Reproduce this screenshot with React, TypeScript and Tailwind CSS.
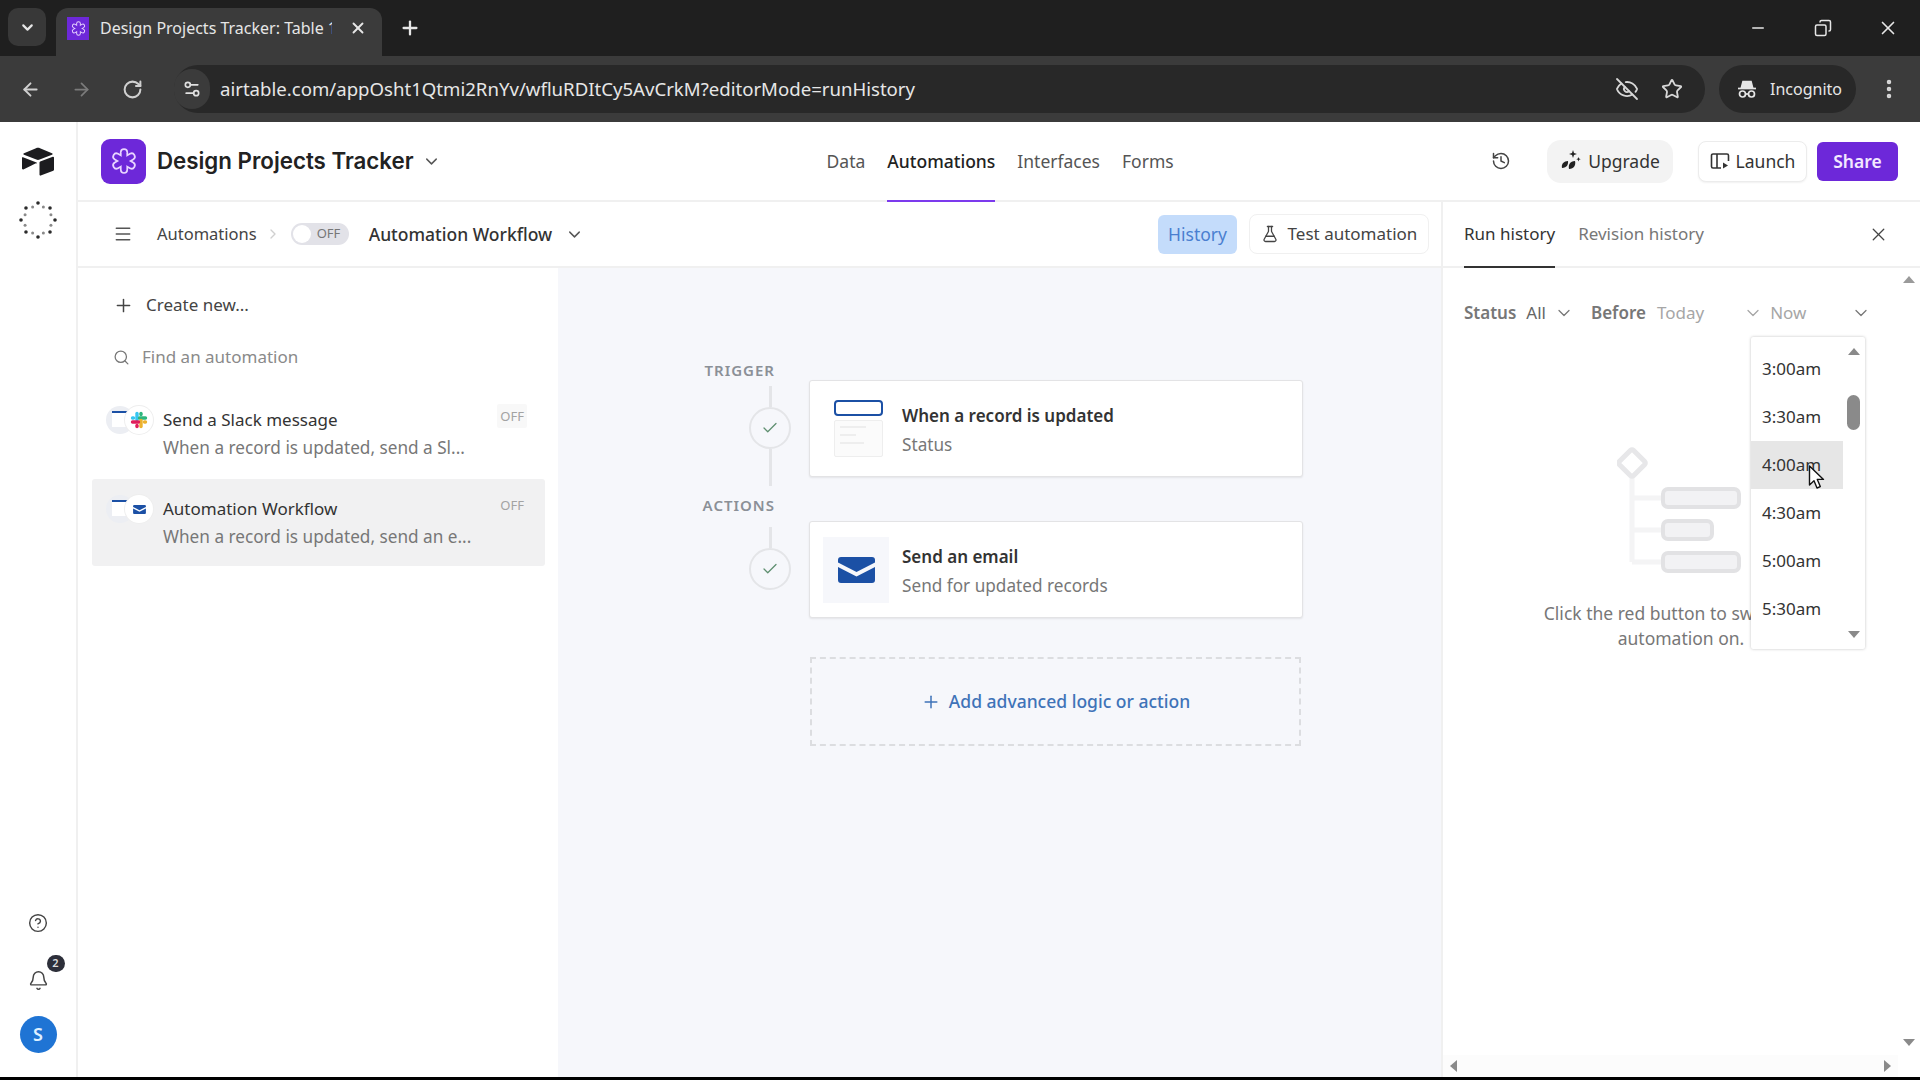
import React from 'react'
import {
  ArrowLeft,
  ArrowRight,
  Bell,
  ChevronDown,
  ChevronRight,
  CircleHelp,
  Copy,
  EllipsisVertical,
  EyeOff,
  FlaskConical,
  History,
  Menu,
  Minus,
  Plus,
  RotateCw,
  Search,
  Settings2,
  Star,
  X,
  Check,
} from 'lucide-react'

const times = ['3:00am', '3:30am', '4:00am', '4:30am', '5:00am', '5:30am']

function BaseGlyph({ size }: { size: number }) {
  const arms = [0, 60, 120]
  return (
    <svg width={size} height={size} viewBox="0 0 24 24" fill="none" strokeLinecap="round">
      {arms.map((a) => (
        <line key={a} x1="12" y1="5" x2="12" y2="19" stroke="#e9d5ff" strokeWidth="6.5" transform={`rotate(${a} 12 12)`} />
      ))}
      {arms.map((a) => (
        <line key={a + 1} x1="12" y1="5" x2="12" y2="19" stroke="#6d28d9" strokeWidth="3.8" transform={`rotate(${a} 12 12)`} />
      ))}
    </svg>
  )
}

function AirtableLogo() {
  return (
    <svg width="34" height="30" viewBox="0 0 34 30">
      <path d="M15 1.2 3 6.2c-.8.3-.8 1.300 0 1.600l12.300 4.800c1.100.4 2.300.4 3.400 0L31 7.800c.8-.3.8-1.300 0-1.600L19 1.200c-1.300-.5-2.700-.5-4 0Z" fill="#1c1c1f" />
      <path d="M18.500 15.500v12.300c0 .6.600 1 1.200.8l12.600-4.900c.4-.1.700-.5.700-.9V10.500c0-.6-.6-1-1.200-.8L19.200 14.600c-.4.200-.7.500-.7.900Z" fill="#1c1c1f" />
      <path d="M15.500 16 11.400 18l-.4.200-8.700 4.200C1.800 22.700 1 22.300 1 21.600V10.800c0-.3.100-.4.300-.5.100-.1.200-.1.300-.1.100 0 .2 0 .4.100l13.500 5.300c.6.200.600 1 0 1.400Z" fill="#1c1c1f" />
    </svg>
  )
}

function DotsRing() {
  const dots = Array.from({ length: 16 }, (_, i) => i)
  return (
    <svg width="38" height="38" viewBox="0 0 38 38">
      {dots.map((i) => {
        const a = (i / 16) * Math.PI * 2 - Math.PI / 2
        const big = i % 2 === 0
        return (
          <circle
            key={i}
            cx={19 + Math.cos(a) * (big ? 17 : 14)}
            cy={19 + Math.sin(a) * (big ? 17 : 14)}
            r={big ? 1.800 : 1.500}
            fill={big ? '#2b2b2b' : '#8a8a8a'}
          />
        )
      })}
    </svg>
  )
}

function IncognitoGlyph() {
  return (
    <svg width="22" height="22" viewBox="0 0 22 22" fill="none" stroke="#e6e6e6" strokeWidth="1.700">
      <path d="M7 3.500h8l1.500 6h-11Z" fill="#e6e6e6" />
      <path d="M2 10.500h18" />
      <circle cx="6.500" cy="16" r="3" />
      <circle cx="15.500" cy="16" r="3" />
      <path d="M9.500 16h3" />
    </svg>
  )
}

function UpgradeGlyph() {
  return (
    <svg width="22" height="24" viewBox="0 0 22 24" fill="#222">
      <path d="M13 1l1 3 3 1-3 1-1 3-1-3-3-1 3-1Z" />
      <path d="M18.500 8l.6 1.600 1.600.6-1.600.6-.6 1.600-.6-1.600-1.600-.6 1.600-.6Z" />
      <path d="M2 19c-1-4 2-7 6-7 .5 3-1 7-6 7Z" />
      <path d="M9 20c-1-4 1-8 6-8 1 4-1 8-6 8Z" />
    </svg>
  )
}

function LaunchGlyph() {
  return (
    <svg width="20" height="20" viewBox="0 0 20 20" fill="none" stroke="#333" strokeWidth="1.600">
      <path d="M11 17H3a1.500 1.500 0 0 1-1.500-1.500v-11A1.500 1.500 0 0 1 3 3h14a1.500 1.500 0 0 1 1.500 1.500V10" />
      <path d="M7 3v14" />
      <path d="M13 11.500v6l5-3Z" fill="#333" stroke="none" />
    </svg>
  )
}

function SlackGlyph() {
  return (
    <svg width="18" height="18" viewBox="0 0 18 18" strokeLinecap="round" strokeWidth="3.400">
      <path d="M7 2.500v6" stroke="#36c5f0" />
      <path d="M2.500 7h1" stroke="#36c5f0" />
      <path d="M15.500 7h-6" stroke="#2eb67d" />
      <path d="M11 2.500v1" stroke="#2eb67d" />
      <path d="M11 15.500v-6" stroke="#ecb22e" />
      <path d="M15.500 11h-1" stroke="#ecb22e" />
      <path d="M2.500 11h6" stroke="#e01e5a" />
      <path d="M7 15.500v-1" stroke="#e01e5a" />
    </svg>
  )
}

function EnvelopeGlyph({ w, h }: { w: number; h: number }) {
  return (
    <svg width={w} height={h} viewBox="0 0 37 26">
      <path d="M3 0h31a3 3 0 0 1 3 3v2.500L18.500 15 0 5.500V3a3 3 0 0 1 3-3Z" fill="#1b50a5" />
      <path d="M0 10l18.500 9.500L37 10v13a3 3 0 0 1-3 3H3a3 3 0 0 1-3-3Z" fill="#1b50a5" />
    </svg>
  )
}

function PairIcon({ children }: { children: React.ReactNode }) {
  return (
    <div className="relative h-[28px] w-[48px] shrink-0">
      <div className="absolute left-0 top-0 h-[28px] w-[28px] overflow-hidden rounded-full bg-[#eceef3]">
        <div className="mx-auto mt-[5px] h-[2px] w-[16px] bg-[#1b50a5]" />
        <div className="mx-auto h-[14px] w-[16px] bg-white" />
      </div>
      <div className="absolute left-[19px] top-0 flex h-[28px] w-[28px] items-center justify-center rounded-full bg-white shadow-[0_0_0_1px_#eeeeee]">
        {children}
      </div>
    </div>
  )
}

function AutomationRow({ title, sub, active, icon }: { title: string; sub: string; active?: boolean; icon: React.ReactNode }) {
  return (
    <div className={`flex h-[87px] w-[453px] items-start rounded-[3px] pl-[14px] pr-[18px] pt-[16px] ${active ? 'bg-[#f1f1f2]' : ''}`}>
      <PairIcon>{icon}</PairIcon>
      <div className="ml-[9px] min-w-0 flex-1">
        <div className="text-[17px] leading-[28px] text-[#333333]">{title}</div>
        <div className="text-[17.200px] leading-[28px] text-[#777777]">{sub}</div>
      </div>
      <div className={`mt-[-2px] rounded-[2px] px-[3px] text-[13px] leading-[24px] text-[#a3a3a3] ${active ? '' : 'bg-[#f8f8f8]'}`}>OFF</div>
    </div>
  )
}

function StepRail({ lineBelow }: { lineBelow: boolean }) {
  return (
    <div className="flex w-[42px] flex-col items-center">
      <div className="h-[21px] w-[3px] bg-[#e4e5e8]" />
      <div className="flex h-[42px] w-[42px] items-center justify-center rounded-full border-2 border-[#e4e5e8] bg-[#f6f7fb]">
        <Check size={18} strokeWidth={1.700} color="#5f8f70" />
      </div>
      {lineBelow && <div className="h-[37px] w-[3px] bg-[#e4e5e8]" />}
    </div>
  )
}

function TriggerPreview() {
  return (
    <div className="ml-[5px] flex w-[49px] flex-col gap-[4px]">
      <div className="h-[16px] rounded-[4px] border-2 border-[#1b50a5] bg-white" />
      <div className="flex h-[37px] flex-col gap-[6px] rounded-[2px] border border-[#eeeeee] bg-[#fbfbfb] p-[5px]">
        <div className="h-[2px] w-[26px] bg-[#eeeeee]" />
        <div className="h-[2px] w-[16px] bg-[#eeeeee]" />
        <div className="h-[2px] w-[24px] bg-[#eeeeee]" />
      </div>
    </div>
  )
}

function StepCard({ title, sub, children }: { title: string; sub: string; children: React.ReactNode }) {
  return (
    <div className="flex h-[97px] w-[494px] items-center rounded-[3px] border border-[#e3e3e5] bg-white shadow-[0_1px_2px_rgba(0,0,0,0.08)]">
      <div className="flex w-[92px] shrink-0 justify-center">{children}</div>
      <div className="pt-[2px]">
        <div className="text-[17px] font-semibold leading-[30px] text-[#333333]">{title}</div>
        <div className="text-[17.200px] leading-[28px] text-[#777777]">{sub}</div>
      </div>
    </div>
  )
}

function EmptyArt() {
  return (
    <svg width="130" height="128" viewBox="0 0 130 128" fill="none">
      <path d="M15 20v96M15 52h30M15 84h30M15 116h30" stroke="#f4f4f5" strokeWidth="5" />
      <rect x="5" y="7" width="20" height="20" rx="2" transform="rotate(45 15 17)" fill="#ffffff" stroke="#e7e7e9" strokeWidth="5" />
      <rect x="46" y="43" width="76" height="18" rx="5" fill="#f2f2f4" stroke="#e2e2e4" strokeWidth="4" />
      <rect x="46" y="75" width="49" height="18" rx="5" fill="#f2f2f4" stroke="#e2e2e4" strokeWidth="4" />
      <rect x="46" y="107" width="76" height="18" rx="5" fill="#f2f2f4" stroke="#e2e2e4" strokeWidth="4" />
    </svg>
  )
}

function TimeDropdown() {
  return (
    <div className="absolute left-[308px] top-[135px] flex h-[312px] w-[114px] rounded-[2px] bg-white shadow-[0_0_3px_rgba(0,0,0,0.25)]">
      <div className="w-[92px] pt-[8px]">
        {times.map((t) => (
          <div key={t} className={`flex h-[48px] items-center pl-[11px] text-[17px] text-[#333333] ${t === '4:00am' ? 'bg-[#e6e6e6]' : ''}`}>
            {t}
          </div>
        ))}
      </div>
      <div className="relative flex-1">
        <div className="absolute left-[5px] top-[11px] h-0 w-0 border-x-[6px] border-b-[7px] border-x-transparent border-b-[#8a8a8a]" />
        <div className="absolute left-[4px] top-[58px] h-[35px] w-[13px] rounded-full bg-[#8a8a8a]" />
        <div className="absolute bottom-[11px] left-[5px] h-0 w-0 border-x-[6px] border-t-[7px] border-x-transparent border-t-[#8a8a8a]" />
      </div>
    </div>
  )
}

function Cursor() {
  return (
    <svg className="absolute left-[365px] top-[263px]" width="18" height="26" viewBox="0 0 18 26">
      <path d="M1.500 1v19l4.500-4.300 3 7.300 3.300-1.400-3-7.200h6.200Z" fill="#ffffff" stroke="#111111" strokeWidth="1.400" strokeLinejoin="round" />
    </svg>
  )
}

export default function App() {
  return (
    <div className="flex h-[1080px] w-[1920px] flex-col overflow-hidden bg-white font-['Noto_Sans',sans-serif]">
      {/* browser tabs */}
      <div className="flex h-[56px] items-end bg-[#1f1f1f] pl-[8px]">
        <div className="mb-[10px] flex h-[38px] w-[38px] items-center justify-center rounded-[10px] bg-[#383838]">
          <ChevronDown size={17} strokeWidth={3} color="#e6e6e6" />
        </div>
        <div className="ml-[10px] flex h-[48px] w-[326px] items-center rounded-t-[12px] bg-[#3b3b3b] pb-[8px] pl-[11px]">
          <div className="flex h-[23px] w-[22px] items-center justify-center bg-[#6d28d9]">
            <BaseGlyph size={17} />
          </div>
          <div className="ml-[11px] w-[232px] overflow-hidden whitespace-nowrap text-[16px] leading-[24px] text-[#e6e6e6]">Design Projects Tracker: Table 1</div>
          <X size={18} strokeWidth={2.500} color="#e6e6e6" className="ml-[17px]" />
        </div>
        <Plus size={22} strokeWidth={2.500} color="#e6e6e6" className="mb-[17px] ml-[17px]" />
        <div className="mb-[17px] ml-auto mr-[21px] flex items-center">
          <Minus size={18} strokeWidth={2} color="#e6e6e6" />
          <Copy size={18} strokeWidth={2} color="#e6e6e6" className="ml-[47px] -scale-x-100" />
          <X size={22} strokeWidth={1.800} color="#e6e6e6" className="ml-[45px]" />
        </div>
      </div>

      {/* browser toolbar */}
      <div className="flex h-[66px] items-center bg-[#3b3b3b]">
        <div className="flex w-[174px] items-center pl-[20px]">
          <ArrowLeft size={21} strokeWidth={2.200} color="#d0d0d0" />
          <ArrowRight size={21} strokeWidth={2} color="#7b7b7b" className="ml-[30px]" />
          <RotateCw size={21} strokeWidth={2.300} color="#d0d0d0" className="ml-[30px]" />
        </div>
        <div className="flex h-[48px] w-[1531px] items-center rounded-full bg-[#282828] pr-[22px]">
          <div className="flex h-[40px] w-[36px] items-center justify-center rounded-full bg-[#3b3b3b]">
            <Settings2 size={20} strokeWidth={2} color="#e0e0e0" />
          </div>
          <div className="ml-[10px] text-[18.600px] text-[#e6e6e6]">airtable.com/appOsht1Qtmi2RnYv/wfluRDItCy5AvCrkM?editorMode=runHistory</div>
          <EyeOff size={24} strokeWidth={1.800} color="#d8d8d8" className="ml-auto" />
          <Star size={22} strokeWidth={2} color="#d8d8d8" className="ml-[22px]" />
        </div>
        <div className="ml-[14px] flex h-[48px] w-[137px] items-center rounded-full bg-[#282828] pl-[17px]">
          <IncognitoGlyph />
          <span className="ml-[12px] text-[16px] text-[#e6e6e6]">Incognito</span>
        </div>
        <EllipsisVertical size={24} strokeWidth={2.500} color="#d8d8d8" className="ml-[21px]" />
      </div>

      {/* app */}
      <div className="flex min-h-0 flex-1">
        <div className="flex w-[78px] shrink-0 flex-col items-center border-r-2 border-[#f0f0f0] pt-[25px]">
          <AirtableLogo />
          <div className="mt-[24px]">
            <DotsRing />
          </div>
          <div className="mt-auto flex flex-col items-center pb-[24px]">
            <CircleHelp size={20} strokeWidth={1.700} color="#444444" />
            <div className="relative mt-[37px]">
              <Bell size={21} strokeWidth={1.700} color="#444444" />
              <div className="absolute left-[19px] top-[-15px] flex h-[17px] w-[18px] items-center justify-center rounded-full bg-[#2d2f3a] text-[11px] font-semibold text-[#dddddd]">2</div>
            </div>
            <div className="mt-[25px] flex h-[37px] w-[37px] items-center justify-center rounded-full bg-[#1f74d4] text-[18px] font-semibold text-[#dff0ff]">S</div>
          </div>
        </div>

        <div className="flex min-w-0 flex-1 flex-col">
          {/* base header */}
          <div className="flex h-[80px] shrink-0 items-center border-b-2 border-[#f0f0f0] pl-[23px]">
            <div className="flex h-[45px] w-[45px] items-center justify-center rounded-[9px] bg-[#6d28d9]">
              <BaseGlyph size={30} />
            </div>
            <span className="ml-[11px] whitespace-nowrap font-['Inter',sans-serif] text-[22.300px] font-semibold text-[#222222]">Design Projects Tracker</span>
            <ChevronDown size={19} strokeWidth={1.800} color="#555555" className="ml-[8px]" />
            <nav className="ml-[386px] flex h-full items-center gap-[22px] text-[17.500px] text-[#555555]">
              <span>Data</span>
              <span className="relative flex h-full items-center font-medium text-[#222222]">
                Automations
                <span className="absolute bottom-[-2px] left-0 right-0 h-[2px] bg-[#7c3aed]" />
              </span>
              <span>Interfaces</span>
              <span>Forms</span>
            </nav>
            <History size={20} strokeWidth={1.800} color="#444444" className="ml-auto" />
            <div className="ml-[36px] flex h-[43px] w-[126px] items-center justify-center gap-[6px] rounded-[14px] bg-[#f3f3f3] text-[17.500px] text-[#333333]">
              <UpgradeGlyph />
              Upgrade
            </div>
            <div className="ml-[25px] flex h-[41px] w-[109px] items-center justify-center gap-[6px] rounded-[8px] border border-[#ececec] bg-white text-[17.500px] text-[#333333] shadow-[0_1px_2px_rgba(0,0,0,0.06)]">
              <LaunchGlyph />
              Launch
            </div>
            <div className="ml-[10px] mr-[22px] flex h-[39px] w-[81px] items-center justify-center rounded-[6px] bg-[#6d28d9] text-[17.500px] font-semibold text-[#f3e8ff]">Share</div>
          </div>

          <div className="flex min-h-0 flex-1">
            {/* builder */}
            <div className="flex w-[1363px] shrink-0 flex-col">
              <div className="flex h-[66px] shrink-0 items-center border-b-2 border-[#f0f0f0] pl-[35px] text-[17.500px]">
                <Menu size={20} strokeWidth={1.800} color="#555555" />
                <span className="ml-[24px] text-[16.500px] text-[#444444]">Automations</span>
                <ChevronRight size={16} color="#d0d0d0" className="ml-[8px]" />
                <div className="ml-[10px] flex h-[22px] w-[58px] items-center rounded-full bg-[#e2e2e8] pl-[2px]">
                  <div className="h-[18px] w-[18px] rounded-full bg-white" />
                  <span className="ml-[6px] text-[13px] text-[#777777]">OFF</span>
                </div>
                <span className="ml-[20px] font-medium text-[#333333]">Automation Workflow</span>
                <ChevronDown size={19} strokeWidth={1.800} color="#555555" className="ml-[13px]" />
                <div className="ml-auto flex h-[39px] w-[79px] items-center justify-center rounded-[6px] bg-[#c4dcfb] text-[#4a7fd0]">History</div>
                <div className="ml-[12px] mr-[12px] flex h-[40px] w-[180px] items-center justify-center gap-[9px] rounded-[8px] border border-[#f0f0f0] bg-white text-[17px] text-[#444444]">
                  <FlaskConical size={18} strokeWidth={1.700} color="#444444" />
                  Test automation
                </div>
              </div>

              <div className="flex min-h-0 flex-1">
                {/* automation list */}
                <div className="w-[480px] shrink-0 pl-[14px]">
                  <div className="mt-[23px] flex h-[28px] items-center pl-[21px] text-[17px] text-[#444444]">
                    <Plus size={21} strokeWidth={1.700} color="#444444" />
                    <span className="ml-[12px]">Create new...</span>
                  </div>
                  <div className="mt-[24px] flex h-[28px] items-center pl-[21px] text-[17px] text-[#8a8a8a]">
                    <Search size={17} strokeWidth={1.800} color="#777777" />
                    <span className="ml-[12px]">Find an automation</span>
                  </div>
                  <div className="mt-[19px] flex flex-col gap-[2px]">
                    <AutomationRow title="Send a Slack message" sub="When a record is updated, send a Sl..." icon={<SlackGlyph />} />
                    <AutomationRow active title="Automation Workflow" sub="When a record is updated, send an e..." icon={<EnvelopeGlyph w={13} h={9} />} />
                  </div>
                </div>

                {/* canvas */}
                <div className="flex min-w-0 flex-1 bg-[#f6f7fb] pl-[142px] pt-[93px]">
                  <div className="flex w-[109px] shrink-0 flex-col items-end">
                    <div className="mr-[34px] h-[19px] text-[15px] font-semibold leading-[19px] tracking-[1px] text-[#8b9097]">TRIGGER</div>
                    <div className="mr-[18px] mt-[6px]">
                      <StepRail lineBelow />
                    </div>
                    <div className="mr-[34px] mt-[10px] h-[19px] text-[15px] font-semibold leading-[19px] tracking-[1px] text-[#8b9097]">ACTIONS</div>
                    <div className="mr-[18px] mt-[12px]">
                      <StepRail lineBelow={false} />
                    </div>
                  </div>
                  <div className="flex flex-col pt-[19px]">
                    <StepCard title="When a record is updated" sub="Status">
                      <TriggerPreview />
                    </StepCard>
                    <div className="mt-[44px]">
                      <StepCard title="Send an email" sub="Send for updated records">
                        <div className="flex h-[66px] w-[66px] items-center justify-center bg-[#f6f7fb]">
                          <EnvelopeGlyph w={37} h={26} />
                        </div>
                      </StepCard>
                    </div>
                    <div className="ml-[1px] mt-[39px] flex h-[89px] w-[491px] items-center justify-center gap-[8px] border-2 border-dashed border-[#dcdde0] text-[17.500px] font-medium text-[#3f73b8]">
                      <Plus size={20} strokeWidth={1.800} color="#3f73b8" />
                      Add advanced logic or action
                    </div>
                  </div>
                </div>
              </div>
            </div>

            {/* run history panel */}
            <div className="relative flex min-w-0 flex-1 flex-col overflow-hidden border-l-2 border-[#f0f0f0]">
              <div className="flex h-[66px] shrink-0 items-center border-b-2 border-[#f0f0f0] pl-[21px] text-[17px]">
                <span className="relative flex h-full items-center text-[#333333]">
                  Run history
                  <span className="absolute bottom-[-2px] left-0 right-0 h-[2px] bg-[#333333]" />
                </span>
                <span className="ml-[23px] text-[#777777]">Revision history</span>
                <X size={21} strokeWidth={1.500} color="#444444" className="ml-auto mr-[31px]" />
              </div>
              <div className="flex h-[90px] shrink-0 items-center pl-[21px] text-[17px]">
                <span className="font-semibold text-[#777777]">Status</span>
                <span className="ml-[10px] text-[#666666]">All</span>
                <ChevronDown size={20} strokeWidth={1.500} color="#777777" className="ml-[8px]" />
                <span className="ml-[17px] font-semibold text-[#777777]">Before</span>
                <span className="ml-[11px] text-[#a6a6a6]">Today</span>
                <ChevronDown size={20} strokeWidth={1.500} color="#a6a6a6" className="ml-[39px]" />
                <span className="ml-[7px] text-[#a6a6a6]">Now</span>
                <ChevronDown size={20} strokeWidth={1.500} color="#777777" className="ml-[45px]" />
              </div>
              <div className="ml-[174px] mt-[88px]">
                <EmptyArt />
              </div>
              <div className="ml-[23px] mt-[27px] w-[430px] text-center text-[17.500px] leading-[25px] text-[#777777]">
                Click the red button to switch this
                <br />
                automation on.
              </div>

              <TimeDropdown />
              <Cursor />

              {/* page scrollbars */}
              <div className="absolute right-[5px] top-[74px] h-0 w-0 border-x-[6px] border-b-[7px] border-x-transparent border-b-[#9a9a9a]" />
              <div className="absolute right-[5px] top-[837px] h-0 w-0 border-x-[6px] border-t-[7px] border-x-transparent border-t-[#8a8a8a]" />
              <div className="absolute bottom-0 left-0 right-[22px] flex h-[22px] items-center justify-between bg-[#fcfcfc] px-[7px]">
                <div className="h-0 w-0 border-y-[6px] border-r-[7px] border-y-transparent border-r-[#8a8a8a]" />
                <div className="h-0 w-0 border-y-[6px] border-l-[7px] border-y-transparent border-l-[#8a8a8a]" />
              </div>
            </div>
          </div>
        </div>
      </div>
      <div className="h-[3px] shrink-0 bg-black" />
    </div>
  )
}
